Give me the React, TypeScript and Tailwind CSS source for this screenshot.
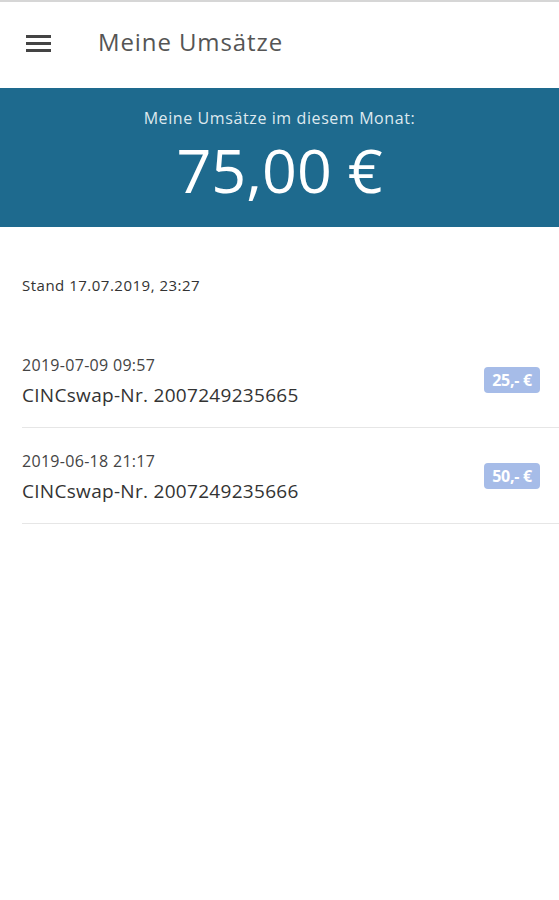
import React from "react";

type Umsatz = {
    date: string;
    nr: string;
    amount: string;
};

const umsaetze: Umsatz[] = [
    { date: "2019-07-09 09:57", nr: "CINCswap-Nr. 2007249235665", amount: "25,- €" },
    { date: "2019-06-18 21:17", nr: "CINCswap-Nr. 2007249235666", amount: "50,- €" },
];

const App: React.FC = () => {
    return (
        <div className="min-h-[900px] bg-white font-['Open_Sans',sans-serif]">
            <div className="h-[2px] bg-[#d6d6d6]" />

            {/* header */}
            <div className="h-[86px] flex items-center">
                <div className="ml-[26px] mb-[4px] w-[25px] flex flex-col gap-[4px]">
                    <div className="h-[3px] bg-[#444]" />
                    <div className="h-[3px] bg-[#444]" />
                    <div className="h-[3px] bg-[#444]" />
                </div>
                <div className="ml-[47px] mb-[6px] text-[24px] text-[#555] tracking-[0.9px]">Meine Umsätze</div>
            </div>

            {/* summary */}
            <div className="bg-[#1e6a8e] pt-[19px] pb-[22px] text-center">
                <div className="text-[16px] leading-[22px] text-[#dfe9ef] tracking-[0.6px]">Meine Umsätze im diesem Monat:</div>
                <div className="mt-[6px] text-[61px] leading-[70px] text-white">75,00 €</div>
            </div>

            <div className="pl-[22px]">
                <div className="mt-[48px] text-[15px] leading-[20px] text-[#333] tracking-[0.5px]">Stand 17.07.2019, 23:27</div>

                <div className="mt-[60px]">
                    {umsaetze.map((u, i) => (
                        <div key={i} className={i > 0 ? "pt-[23px] border-b border-[#e6e6e6]" : "border-b border-[#e6e6e6]"}>
                            <div className="flex justify-between items-start pb-[19px]">
                                <div>
                                    <div className="text-[16px] leading-[20px] text-[#444] tracking-[0.3px]">{u.date}</div>
                                    <div className="mt-[7px] text-[19px] leading-[26px] text-[#333] tracking-[0.3px]">{u.nr}</div>
                                </div>
                                <div className="mt-[12px] mr-[19px] w-[56px] h-[26px] rounded-[4px] bg-[#a6bce8] flex items-center justify-center text-white text-[16px] font-bold tracking-[-0.3px]">
                                    {u.amount}
                                </div>
                            </div>
                        </div>
                    ))}
                </div>
            </div>
        </div>
    );
};

export default App;
